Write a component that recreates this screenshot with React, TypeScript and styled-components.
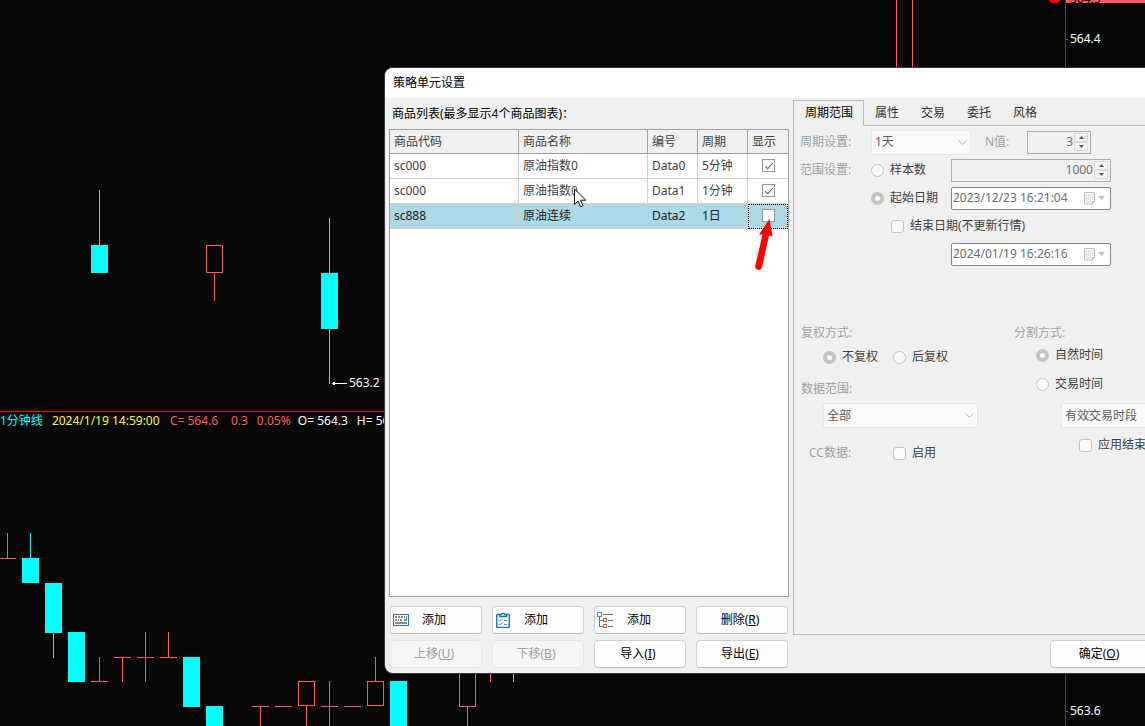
import React from 'react';
import styled, { createGlobalStyle, css } from 'styled-components';

const Global = createGlobalStyle`
  *, *::before, *::after { box-sizing: border-box; }
  body {
    margin: 0;
    background: #070707;
    color: #000;
    font: 12px/16px "Noto Sans", "Noto Sans CJK SC", sans-serif;
  }
  button, input, select { font: inherit; margin: 0; }
  u { text-decoration-skip-ink: none; }
`;

const UP = '#ff5a5a';
const DOWN = '#00ffff';

/* ---------- chart behind the dialog ---------- */

const Desktop = styled.div`
  position: relative;
  display: grid;
  grid-template-columns: minmax(0, 1fr) 80px;
  min-height: 100vh;
  overflow: hidden;
  background: #070707;
`;

const Charts = styled.main`
  display: flex;
  flex-direction: column;
  min-width: 0;
`;

const Pane = styled.section<{ $grow?: boolean }>`
  position: relative;
  display: flex;
  flex-direction: column;
  ${(p) => (p.$grow ? 'flex: 1;' : 'height: 411px;')}
`;

const Plot = styled.svg`
  display: block;
  flex: 1;
  width: 100%;
  min-height: 0;
  shape-rendering: crispEdges;
`;

const PriceTag = styled.span`
  position: absolute;
  left: 349px;
  top: 375px;
  color: #fff;
`;

const QuoteBar = styled.div`
  display: flex;
  gap: 9px;
  height: 20px;
  padding-top: 1px;
  border-top: 1px solid #f00000;
  white-space: pre;
`;

const Quote = styled.span<{ $color: string; $width?: number }>`
  width: ${(p) => (p.$width ? `${p.$width}px` : 'auto')};
  color: ${(p) => p.$color};
`;

const Axis = styled.aside`
  display: flex;
  flex-direction: column;
  justify-content: space-between;
  overflow: hidden;
  border-left: 1px solid #444;
  color: #fff;
`;

const AxisTop = styled.div`
  display: flex;
  flex-direction: column;
  gap: 28px;
`;

const LastPrice = styled.div`
  display: flex;
  align-items: flex-end;
  height: 3px;
  padding-left: 4px;
  overflow: hidden;
  background: ${UP};
  color: #000;
  line-height: 8px;
`;

const AxisLabel = styled.div`
  display: flex;
  align-items: center;
  gap: 2px;
  &::before { content: ''; width: 2px; height: 1px; background: #666; }
`;

const AxisBottom = styled.div`
  padding-bottom: 7px;
`;

type Candle = { x: number; kind: 'up' | 'down'; top: number; bottom: number; high?: number; low?: number };

const upperCandles: Candle[] = [
  { x: 99, kind: 'down', top: 245, bottom: 273, high: 190 },
  { x: 214, kind: 'up', top: 245, bottom: 273, low: 301 },
  { x: 329, kind: 'down', top: 273, bottom: 329, high: 218, low: 384 },
  { x: 904, kind: 'up', top: -10, bottom: 200 },
];

const lowerCandles: Candle[] = [
  { x: 7, kind: 'up', top: 558, bottom: 559, high: 533 },
  { x: 30, kind: 'down', top: 558, bottom: 583, high: 533 },
  { x: 53, kind: 'down', top: 583, bottom: 633, low: 658 },
  { x: 76, kind: 'down', top: 632, bottom: 682 },
  { x: 99, kind: 'up', top: 681, bottom: 682, high: 657 },
  { x: 122, kind: 'up', top: 657, bottom: 658, low: 682 },
  { x: 145, kind: 'up', top: 657, bottom: 658, high: 632, low: 682 },
  { x: 168, kind: 'up', top: 657, bottom: 658, high: 632 },
  { x: 191, kind: 'down', top: 657, bottom: 707 },
  { x: 214, kind: 'down', top: 706, bottom: 760 },
  { x: 260, kind: 'up', top: 706, bottom: 707, low: 760 },
  { x: 283, kind: 'up', top: 706, bottom: 707 },
  { x: 306, kind: 'up', top: 681, bottom: 706, low: 760 },
  { x: 329, kind: 'up', top: 706, bottom: 707, high: 681, low: 760 },
  { x: 352, kind: 'up', top: 706, bottom: 707 },
  { x: 375, kind: 'up', top: 681, bottom: 706, high: 657 },
  { x: 398, kind: 'down', top: 681, bottom: 760 },
  { x: 467, kind: 'up', top: 657, bottom: 707, low: 760 },
  { x: 490, kind: 'up', top: 657, bottom: 658, low: 682 },
  { x: 513, kind: 'down', top: 657, bottom: 658, low: 682 },
];

function Candles({ data }: { data: Candle[] }) {
  return (
    <>
      {data.map((c) => {
        const color = c.kind === 'up' ? UP : DOWN;
        const flat = c.bottom - c.top <= 1;
        return (
          <g key={c.x} fill={color}>
            {c.high !== undefined && <rect x={c.x} y={c.high} width={1} height={c.top - c.high} />}
            {c.low !== undefined && <rect x={c.x} y={c.bottom} width={1} height={c.low - c.bottom} />}
            {c.kind === 'down' || flat ? (
              <rect x={c.x - 8} y={c.top} width={17} height={c.bottom - c.top} />
            ) : (
              <rect x={c.x - 7.5} y={c.top + 0.5} width={16} height={c.bottom - c.top - 1} fill="none" stroke={color} />
            )}
          </g>
        );
      })}
    </>
  );
}

/* ---------- dialog ---------- */

const Dialog = styled.div`
  position: absolute;
  left: 385px;
  right: -56px;
  top: 68px;
  display: flex;
  flex-direction: column;
  overflow: hidden;
  border-radius: 8px 0 0 8px;
  background: #f0f0f0;
  box-shadow: 0 0 0 1px #383838;
`;

const TitleBar = styled.h1`
  height: 30px;
  margin: 0;
  padding: 0 8px;
  background: #fff;
  font-size: 12px;
  font-weight: 400;
  line-height: 30px;
`;

const Body = styled.div`
  display: flex;
  gap: 4px;
  padding: 0 4px 5px;
`;

const ListColumn = styled.section`
  display: flex;
  flex-direction: column;
  width: 400px;
`;

const ListTitle = styled.h2`
  margin: 0;
  padding-left: 3px;
  font-size: 12px;
  font-weight: 400;
  line-height: 31px;
`;

const ListBox = styled.div`
  height: 468px;
  border: 1px solid #a0a0a0;
  background: #fff;
`;

const Table = styled.table`
  width: 100%;
  table-layout: fixed;
  border-collapse: separate;
  border-spacing: 0;
  color: #404040;
`;

const Head = styled.th`
  height: 24px;
  padding: 0 4px;
  border-right: 1px solid #a0a0a0;
  border-bottom: 1px solid #a0a0a0;
  background: #f0f0f0;
  font-weight: 400;
  text-align: left;
  &:last-child { border-right: 0; }
`;

const Row = styled.tr<{ $selected?: boolean }>`
  background: ${(p) => (p.$selected ? '#add8e6' : '#fff')};
  color: ${(p) => (p.$selected ? '#202020' : '#404040')};
`;

const Cell = styled.td<{ $focus?: boolean }>`
  height: 25px;
  padding: 0 4px;
  border-right: 1px solid #d0d0d0;
  border-bottom: 1px solid #d0d0d0;
  &:last-child {
    padding-bottom: 2px;
    border-right: 0;
    text-align: center;
    line-height: 0;
  }
  ${(p) => p.$focus && css`outline: 1px dotted #000; outline-offset: -1px;`}
`;

const tick = css`
  &:checked::after {
    content: '';
    position: absolute;
    left: 4px;
    top: 1px;
    width: 4px;
    height: 8px;
    border: solid #505050;
    border-width: 0 1px 1px 0;
    transform: rotate(42deg);
  }
`;

const GridCheck = styled.input.attrs({ type: 'checkbox' })`
  appearance: none;
  position: relative;
  width: 13px;
  height: 13px;
  border: 1px solid #999;
  background: #fff;
  ${tick}
`;

const Buttons = styled.div`
  display: grid;
  grid-template-columns: repeat(4, 92px);
  gap: 6px 10px;
  padding: 9px 1px 0;
`;

const PushButton = styled.button`
  display: flex;
  align-items: center;
  justify-content: center;
  height: 28px;
  padding: 0 4px 0 0;
  border: 1px solid #d0d0d0;
  border-bottom-color: #bababa;
  border-radius: 4px;
  background: #fdfdfd;
  color: #000;
  &:disabled {
    border-color: #e6e6e6;
    background: #f6f6f6;
    color: #a0a0a0;
  }
`;

const IconButton = styled(PushButton)`
  justify-content: flex-start;
  gap: 13px;
  padding: 0 2px;
`;

const SettingsColumn = styled.section`
  display: flex;
  flex: 1;
  flex-direction: column;
  min-width: 0;
`;

const Tabs = styled.div`
  display: flex;
  height: 28px;
  padding-top: 2px;
`;

const Tab = styled.button<{ $active?: boolean }>`
  padding: 0 11px;
  border: 0;
  border-bottom: 1px solid #bcbcbc;
  background: #f0f0f0;
  color: #333;
  ${(p) => p.$active && css`
    padding-right: 10px;
    border: 1px solid #bcbcbc;
    border-bottom-color: #f0f0f0;
    color: #000;
  `}
`;

const TabFill = styled.div`
  flex: 1;
  border-bottom: 1px solid #bcbcbc;
`;

const Panel = styled.div`
  display: flex;
  flex-direction: column;
  height: 509px;
  padding: 2px 6px;
  border: 1px solid #bcbcbc;
  border-top: 0;
`;

const RangeGrid = styled.div`
  display: grid;
  grid-template-columns: 71px 80px 1fr;
  grid-auto-rows: 28px;
  align-items: center;
`;

const Caption = styled.span`
  color: #a0a0a0;
`;

const PeriodFields = styled.div`
  display: flex;
  grid-column: span 2;
  align-items: center;
`;

const NLabel = styled.label`
  width: 56px;
  padding-left: 14px;
  color: #a0a0a0;
`;

const Option = styled.label<{ $indent?: number }>`
  display: flex;
  align-items: center;
  gap: 6px;
  height: 22px;
  padding-left: ${(p) => p.$indent ?? 0}px;
  color: #404040;
  white-space: nowrap;
`;

const EndOption = styled(Option)`
  grid-column: 2 / span 2;
`;

const LastCell = styled.div`
  grid-column: 3;
`;

const Radio = styled.input.attrs({ type: 'radio' })`
  appearance: none;
  width: 13px;
  height: 13px;
  border: 1px solid #c3c3c3;
  border-radius: 50%;
  background: #fafafa;
  &:checked { border-width: 4px; }
`;

const Check = styled.input.attrs({ type: 'checkbox' })`
  appearance: none;
  position: relative;
  width: 13px;
  height: 13px;
  border: 1px solid #c3c3c3;
  border-radius: 3px;
  background: #fafafa;
  ${tick}
`;

const SelectBox = styled.div<{ $width: number }>`
  position: relative;
  width: ${(p) => p.$width}px;
  height: 25px;
`;

const Select = styled.select`
  appearance: none;
  width: 100%;
  height: 100%;
  padding: 0 3px;
  border: 1px solid #e6e6e6;
  border-radius: 1px;
  background: #fafafa;
  color: #606060;
  &:disabled { opacity: 1; }
`;

const Chevron = styled.svg`
  position: absolute;
  right: 4px;
  top: 10px;
  pointer-events: none;
`;

const Field = styled.div<{ $width: number; $white?: boolean }>`
  display: flex;
  align-items: center;
  width: ${(p) => p.$width}px;
  height: 23px;
  padding: 0 2px 0 1px;
  border: 1px solid ${(p) => (p.$white ? '#868686' : '#abadb3')};
  border-radius: ${(p) => (p.$white ? 2 : 0)}px;
  background: ${(p) => (p.$white ? '#fff' : '#f0f0f0')};
`;

const FieldInput = styled.input<{ $right?: boolean }>`
  flex: 1;
  min-width: 0;
  padding: 0 1px 0 0;
  border: 0;
  background: transparent;
  color: #6d6d6d;
  text-align: ${(p) => (p.$right ? 'right' : 'left')};
`;

const Spinner = styled.div`
  display: flex;
  flex-direction: column;
  width: 14px;
`;

const SpinButton = styled.button`
  display: flex;
  align-items: center;
  justify-content: center;
  height: 9px;
  padding: 0;
  border: 1px solid #dadada;
  background: #f3f3f3;
`;

const CalendarButton = styled.button`
  display: flex;
  align-items: center;
  gap: 2px;
  padding: 0 3px 0 0;
  border: 0;
  background: transparent;
`;

const Groups = styled.div`
  display: grid;
  grid-template-columns: 213px 1fr;
  padding: 54px 0 0 1px;
`;

const Group = styled.div`
  display: flex;
  flex-direction: column;
`;

const Line = styled.div<{ $before?: number; $indent?: number }>`
  display: flex;
  align-items: center;
  min-height: 22px;
  margin-top: ${(p) => p.$before ?? 0}px;
  padding-left: ${(p) => p.$indent ?? 0}px;
`;

const AdjustOption = styled(Option)`
  width: 70px;
`;

const CcCaption = styled(Caption)`
  width: 84px;
`;

const Footer = styled.div`
  display: flex;
  justify-content: flex-end;
  padding: 5px 45px 0 0;
`;

const OkButton = styled(PushButton)`
  width: 102px;
`;

const Overlay = styled.svg<{ $x: number; $y: number }>`
  position: absolute;
  left: ${(p) => p.$x}px;
  top: ${(p) => p.$y}px;
  pointer-events: none;
`;

function KeyboardIcon() {
  return (
    <svg width="16" height="16" viewBox="0 0 16 16" shapeRendering="crispEdges">
      <rect x="0.5" y="2.5" width="15" height="11" fill="#fff" stroke="#1583c9" />
      <path
        d="M2 4h2v2H2zM5 4h2v2H5zM8 4h2v2H8zM11 4h1v2h-1zM13 4h1v5h-3V7h2zM2 7h2v2H2zM5 7h1v2H5zM7 7h2v2H7zM2 10h12v2H2z"
        fill="#8a8a8a"
      />
    </svg>
  );
}

function ClipboardIcon() {
  return (
    <svg width="16" height="16" viewBox="0 0 16 16" fill="none">
      <rect x="1.7" y="2.500" width="12.600" height="13" rx="1" fill="#fff" stroke="#1479bb" strokeWidth="1.400" />
      <path d="M4.500 4.500v-2h2a1.600 1.600 0 0 1 3 0h2v2z" fill="#fff" stroke="#1479bb" strokeWidth="1.300" />
      <path d="M3.500 8l1.200 1.200L7.200 6.500M3.500 12l1.200 1.200L7.200 10.500M9 8.500h3M9 12.500h3" stroke="#808080" />
    </svg>
  );
}

function TreeIcon() {
  return (
    <svg width="17" height="17" viewBox="0 0 17 17" fill="none" shapeRendering="crispEdges">
      <path d="M6 2.500h10M2.500 5v9.500H6M2.500 8.500H6M11 8.500h5M11 14.500h5" stroke="#707070" />
      <rect x="0.500" y="0.500" width="4" height="4" fill="#fff" stroke="#2e93d5" />
      <rect x="6.500" y="6.500" width="3" height="3" fill="#fff" stroke="#c0583c" />
      <rect x="6.500" y="12.500" width="3" height="3" fill="#fff" stroke="#c0583c" />
    </svg>
  );
}

function Spin() {
  return (
    <Spinner>
      <SpinButton type="button" aria-label="增加" disabled>
        <svg width="5" height="3"><path d="M0 3L2.500 0L5 3z" fill="#555" /></svg>
      </SpinButton>
      <SpinButton type="button" aria-label="减少" disabled>
        <svg width="5" height="3"><path d="M0 0L2.500 3L5 0z" fill="#555" /></svg>
      </SpinButton>
    </Spinner>
  );
}

function Dropdown({ value, width, label }: { value: string; width: number; label: string }) {
  return (
    <SelectBox $width={width}>
      <Select aria-label={label} disabled defaultValue={value}>
        <option>{value}</option>
      </Select>
      <Chevron width="9" height="6" viewBox="0 0 9 6" fill="none">
        <path d="M0.500 0.500L4.500 4.500L8.500 0.500" stroke="#b0b0b0" />
      </Chevron>
    </SelectBox>
  );
}

function DateField({ value, label }: { value: string; label: string }) {
  return (
    <Field $width={160} $white>
      <FieldInput aria-label={label} defaultValue={value} disabled />
      <CalendarButton type="button" aria-label="选择日期" disabled>
        <svg width="12" height="13" viewBox="0 0 12 13" fill="none">
          <path d="M1 .5h9.500v9l-2.500 2.500H1a.5.5 0 0 1-.5-.5V1A.5.5 0 0 1 1 .5z" fill="#f4f4f4" stroke="#bdb9b9" />
          <path d="M2 3.500h7M2 5.500h7M2 7.500h7M2 9.500h5" stroke="#c9ccd4" strokeDasharray="1 1" />
          <path d="M8 12V9.500h2.500z" fill="#a9a4a4" />
        </svg>
        <svg width="7" height="4"><path d="M0 0h7L3.500 4z" fill="#c3c3bb" /></svg>
      </CalendarButton>
    </Field>
  );
}

const instruments = [
  { code: 'sc000', name: '原油指数0', id: 'Data0', period: '5分钟', shown: true },
  { code: 'sc000', name: '原油指数0', id: 'Data1', period: '1分钟', shown: true },
  { code: 'sc888', name: '原油连续', id: 'Data2', period: '1日', shown: false, selected: true },
];

export default function App() {
  return (
    <>
      <Global />
      <Desktop>
        <Charts>
          <Pane>
            <Plot>
              <Candles data={upperCandles} />
              <path d="M332 383.500h15M333.500 382v3M334.500 382v3" stroke="#fff" fill="none" />
              <circle cx="1054.500" cy="-3" r="6.500" fill="#f00" />
            </Plot>
            <PriceTag>563.2</PriceTag>
          </Pane>
          <Pane $grow>
            <QuoteBar>
              <Quote $color={DOWN}>1分钟线</Quote>
              <Quote $color="#ffff00" $width={109}>2024/1/19 14:59:00</Quote>
              <Quote $color={UP} $width={52}>C= 564.6</Quote>
              <Quote $color={UP}>0.3</Quote>
              <Quote $color={UP} $width={32}>0.05%</Quote>
              <Quote $color="#fff" $width={50}>O= 564.3</Quote>
              <Quote $color="#fff">H= 564.6</Quote>
            </QuoteBar>
            <Plot>
              <g transform="translate(0 -431)">
                <Candles data={lowerCandles} />
              </g>
            </Plot>
          </Pane>
        </Charts>
        <Axis>
          <AxisTop>
            <LastPrice>564.5</LastPrice>
            <AxisLabel>564.4</AxisLabel>
          </AxisTop>
          <AxisBottom>
            <AxisLabel>563.6</AxisLabel>
          </AxisBottom>
        </Axis>

        <Dialog role="dialog" aria-labelledby="dialog-title">
          <TitleBar id="dialog-title">策略单元设置</TitleBar>
          <Body>
            <ListColumn>
              <ListTitle>商品列表(最多显示4个商品图表)：</ListTitle>
              <ListBox>
                <Table>
                  <colgroup>
                    <col width="129" />
                    <col width="129" />
                    <col width="50" />
                    <col width="50" />
                    <col />
                  </colgroup>
                  <thead>
                    <tr>
                      <Head>商品代码</Head>
                      <Head>商品名称</Head>
                      <Head>编号</Head>
                      <Head>周期</Head>
                      <Head>显示</Head>
                    </tr>
                  </thead>
                  <tbody>
                    {instruments.map((item) => (
                      <Row key={item.id} $selected={item.selected}>
                        <Cell>{item.code}</Cell>
                        <Cell>{item.name}</Cell>
                        <Cell>{item.id}</Cell>
                        <Cell>{item.period}</Cell>
                        <Cell $focus={item.selected}>
                          <GridCheck aria-label={`显示 ${item.id}`} defaultChecked={item.shown} />
                        </Cell>
                      </Row>
                    ))}
                  </tbody>
                </Table>
              </ListBox>
              <Buttons>
                <IconButton type="button"><KeyboardIcon />添加</IconButton>
                <IconButton type="button"><ClipboardIcon />添加</IconButton>
                <IconButton type="button"><TreeIcon />添加</IconButton>
                <PushButton type="button">删除(<u>R</u>)</PushButton>
                <PushButton type="button" disabled>上移(<u>U</u>)</PushButton>
                <PushButton type="button" disabled>下移(<u>B</u>)</PushButton>
                <PushButton type="button">导入(<u>I</u>)</PushButton>
                <PushButton type="button">导出(<u>E</u>)</PushButton>
              </Buttons>
            </ListColumn>

            <SettingsColumn>
              <Tabs role="tablist">
                <Tab type="button" role="tab" aria-selected $active>周期范围</Tab>
                <Tab type="button" role="tab">属性</Tab>
                <Tab type="button" role="tab">交易</Tab>
                <Tab type="button" role="tab">委托</Tab>
                <Tab type="button" role="tab">风格</Tab>
                <TabFill />
              </Tabs>
              <Panel role="tabpanel">
                <RangeGrid>
                  <Caption>周期设置:</Caption>
                  <PeriodFields>
                    <Dropdown value="1天" width={100} label="周期设置" />
                    <NLabel htmlFor="n-value">N值:</NLabel>
                    <Field $width={64}>
                      <FieldInput id="n-value" defaultValue="3" $right disabled />
                      <Spin />
                    </Field>
                  </PeriodFields>

                  <Caption>范围设置:</Caption>
                  <Option><Radio name="range" disabled />样本数</Option>
                  <Field $width={160}>
                    <FieldInput aria-label="样本数" defaultValue="1000" $right disabled />
                    <Spin />
                  </Field>

                  <span />
                  <Option><Radio name="range" defaultChecked disabled />起始日期</Option>
                  <DateField value="2023/12/23 16:21:04" label="起始日期" />

                  <EndOption $indent={20}><Check disabled />结束日期(不更新行情)</EndOption>
                  <LastCell>
                    <DateField value="2024/01/19 16:26:16" label="结束日期" />
                  </LastCell>
                </RangeGrid>

                <Groups>
                  <Group>
                    <Line><Caption>复权方式:</Caption></Line>
                    <Line $before={2} $indent={22}>
                      <AdjustOption><Radio name="adjust" defaultChecked disabled />不复权</AdjustOption>
                      <AdjustOption><Radio name="adjust" disabled />后复权</AdjustOption>
                    </Line>
                    <Line $before={10}><Caption>数据范围:</Caption></Line>
                    <Line $before={3} $indent={22}><Dropdown value="全部" width={155} label="数据范围" /></Line>
                    <Line $before={14} $indent={8}>
                      <CcCaption>CC数据:</CcCaption>
                      <Option><Check disabled />启用</Option>
                    </Line>
                  </Group>
                  <Group>
                    <Line><Caption>分割方式:</Caption></Line>
                    <Line $indent={22}><Option><Radio name="split" defaultChecked disabled />自然时间</Option></Line>
                    <Line $before={7} $indent={22}><Option><Radio name="split" disabled />交易时间</Option></Line>
                    <Line $before={8} $indent={47}><Dropdown value="有效交易时段" width={120} label="分割时段" /></Line>
                    <Line $before={6} $indent={65}><Option><Check disabled />应用结束</Option></Line>
                  </Group>
                </Groups>
              </Panel>
              <Footer>
                <OkButton type="button">确定(<u>O</u>)</OkButton>
              </Footer>
            </SettingsColumn>
          </Body>
        </Dialog>

        <Overlay $x={574} $y={188} width="13" height="20" viewBox="0 0 13 20">
          <path d="M.5 1v15.500l3.600-3.400 2.500 5.700 2.500-1.100-2.500-5.500h5.200z" fill="#fff" stroke="#111" />
        </Overlay>
        <Overlay $x={752} $y={217} width="24" height="56" viewBox="0 0 24 56">
          <path d="M17.500 2l3 17.500-3.500-1L10 50.500a3.500 3.500 0 0 1-6.800-1.400L10.500 17.500 7 17.500z" fill="#f00" />
        </Overlay>
      </Desktop>
    </>
  );
}
